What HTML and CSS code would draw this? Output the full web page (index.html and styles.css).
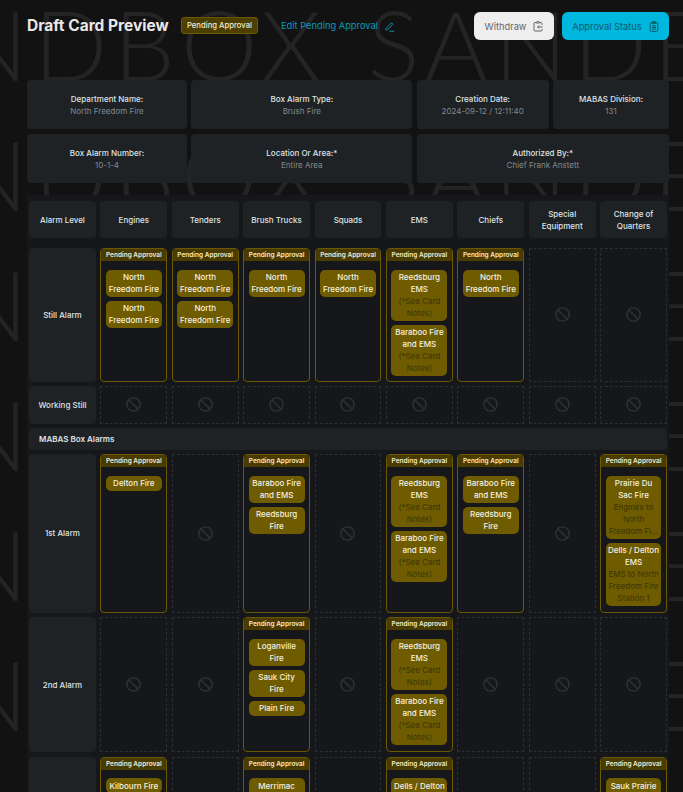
FILE: index.html
```html
<!doctype html>
<html lang="en">
    <head>
        <meta charset="UTF-8" />
        <meta name="viewport" content="width=device-width, initial-scale=1.0" />
        <title>Draft Card Preview</title>
        <link rel="stylesheet" href="styles.css">
    </head>
    <body>
        <svg class="icon-defs" width="0" height="0" aria-hidden="true">
            <symbol id="ban" viewBox="0 0 14 14">
                <circle cx="7" cy="7" r="6.2" fill="none" stroke="currentColor" stroke-width="1.3" />
                <path d="M2.7 2.7 11.3 11.3" fill="none" stroke="currentColor" stroke-width="1.3" />
            </symbol>
        </svg>
        <div class="page">
            <div class="watermark" aria-hidden="true">
                <div class="watermark-row">SANDBOX SANDBOX SANDBOX</div>
                <div class="watermark-row">SANDBOX SANDBOX SANDBOX</div>
                <div class="watermark-row">SANDBOX SANDBOX SANDBOX</div>
                <div class="watermark-row">SANDBOX SANDBOX SANDBOX</div>
                <div class="watermark-row">SANDBOX SANDBOX SANDBOX</div>
                <div class="watermark-row">SANDBOX SANDBOX SANDBOX</div>
                <div class="watermark-row">SANDBOX SANDBOX SANDBOX</div>
            </div>

            <div class="content">
                <div class="top-bar">
                    <h1>Draft Card Preview</h1>
                    <span class="status-badge">Pending Approval</span>
                    <a href="#" class="edit-link">
                        Edit Pending Approval
                        <svg width="11" height="11" viewBox="0 0 12 12" fill="none" stroke="currentColor" stroke-width="1">
                            <path d="M2 8.2 8.2 2l1.6 1.6-6.2 6.2H2z" />
                            <path d="M6 11.2h5.2" />
                        </svg>
                    </a>
                    <button class="btn btn-withdraw">
                        Withdraw
                        <svg width="10" height="11" viewBox="0 0 10 11" fill="none" stroke="currentColor" stroke-width="1">
                            <path d="M3.2 1.6H2a1 1 0 0 0-1 1V9a1 1 0 0 0 1 1h6a1 1 0 0 0 1-1V8" />
                            <path d="M3.2 1.6a1 1 0 0 1 1-1h1.6a1 1 0 0 1 1 1v.4H3.2z" />
                            <path d="M6.8 1.6H8a1 1 0 0 1 1 1V4" />
                            <path d="M9.6 6H4.6M6.2 4.4 4.6 6l1.6 1.6" />
                        </svg>
                    </button>
                    <button class="btn btn-status">
                        Approval Status
                        <svg width="10" height="11" viewBox="0 0 10 11" fill="none" stroke="currentColor" stroke-width="1">
                            <rect x="1.2" y="1.6" width="7.6" height="8.8" rx="1.2" />
                            <rect x="3" y="0.6" width="4" height="2" rx="0.6" />
                            <path d="M3 5h4M3 6.6h4M3 8.2h4" />
                        </svg>
                    </button>
                </div>

                <div class="info-grid">
                    <div class="info-card"><strong>Department Name:</strong><span>North Freedom Fire</span></div>
                    <div class="info-card"><strong>Box Alarm Type:</strong><span>Brush Fire</span></div>
                    <div class="info-card"><strong>Creation Date:</strong><span>2024-09-12 / 12:11:40</span></div>
                    <div class="info-card"><strong>MABAS Division:</strong><span>131</span></div>
                    <div class="info-card"><strong>Box Alarm Number:</strong><span>10-1-4</span></div>
                    <div class="info-card"><strong>Location Or Area:*</strong><span>Entire Area</span></div>
                    <div class="info-card info-wide"><strong>Authorized By:*</strong><span>Chief Frank Anstett</span></div>
                </div>

                <div class="alarm-panel">
                    <div class="alarm-grid">
                        <div class="col-head">Alarm Level</div>
                        <div class="col-head">Engines</div>
                        <div class="col-head">Tenders</div>
                        <div class="col-head">Brush Trucks</div>
                        <div class="col-head">Squads</div>
                        <div class="col-head">EMS</div>
                        <div class="col-head">Chiefs</div>
                        <div class="col-head">Special Equipment</div>
                        <div class="col-head">Change of Quarters</div>

                        <!-- Still Alarm -->
                        <div class="row-head">Still Alarm</div>
                        <div class="cell-pending">
                            <div class="pending-title">Pending Approval</div>
                            <div class="chips">
                                <div class="chip">North Freedom Fire</div>
                                <div class="chip">North Freedom Fire</div>
                            </div>
                        </div>
                        <div class="cell-pending">
                            <div class="pending-title">Pending Approval</div>
                            <div class="chips">
                                <div class="chip">North Freedom Fire</div>
                                <div class="chip">North Freedom Fire</div>
                            </div>
                        </div>
                        <div class="cell-pending">
                            <div class="pending-title">Pending Approval</div>
                            <div class="chips">
                                <div class="chip">North Freedom Fire</div>
                            </div>
                        </div>
                        <div class="cell-pending">
                            <div class="pending-title">Pending Approval</div>
                            <div class="chips">
                                <div class="chip">North Freedom Fire</div>
                            </div>
                        </div>
                        <div class="cell-pending">
                            <div class="pending-title">Pending Approval</div>
                            <div class="chips">
                                <div class="chip">Reedsburg EMS<span class="chip-note">(*See Card Notes)</span></div>
                                <div class="chip">Baraboo Fire and EMS<span class="chip-note">(*See Card Notes)</span></div>
                            </div>
                        </div>
                        <div class="cell-pending">
                            <div class="pending-title">Pending Approval</div>
                            <div class="chips">
                                <div class="chip">North Freedom Fire</div>
                            </div>
                        </div>
                        <div class="cell-empty"><svg><use href="#ban" /></svg></div>
                        <div class="cell-empty"><svg><use href="#ban" /></svg></div>

                        <!-- Working Still -->
                        <div class="row-head row-short">Working Still</div>
                        <div class="cell-empty"><svg><use href="#ban" /></svg></div>
                        <div class="cell-empty"><svg><use href="#ban" /></svg></div>
                        <div class="cell-empty"><svg><use href="#ban" /></svg></div>
                        <div class="cell-empty"><svg><use href="#ban" /></svg></div>
                        <div class="cell-empty"><svg><use href="#ban" /></svg></div>
                        <div class="cell-empty"><svg><use href="#ban" /></svg></div>
                        <div class="cell-empty"><svg><use href="#ban" /></svg></div>
                        <div class="cell-empty"><svg><use href="#ban" /></svg></div>

                        <div class="section-head">MABAS Box Alarms</div>

                        <!-- 1st Alarm -->
                        <div class="row-head row-first">1st Alarm</div>
                        <div class="cell-pending">
                            <div class="pending-title">Pending Approval</div>
                            <div class="chips">
                                <div class="chip">Delton Fire</div>
                            </div>
                        </div>
                        <div class="cell-empty"><svg><use href="#ban" /></svg></div>
                        <div class="cell-pending">
                            <div class="pending-title">Pending Approval</div>
                            <div class="chips">
                                <div class="chip">Baraboo Fire and EMS</div>
                                <div class="chip">Reedsburg Fire</div>
                            </div>
                        </div>
                        <div class="cell-empty"><svg><use href="#ban" /></svg></div>
                        <div class="cell-pending">
                            <div class="pending-title">Pending Approval</div>
                            <div class="chips">
                                <div class="chip">Reedsburg EMS<span class="chip-note">(*See Card Notes)</span></div>
                                <div class="chip">Baraboo Fire and EMS<span class="chip-note">(*See Card Notes)</span></div>
                            </div>
                        </div>
                        <div class="cell-pending">
                            <div class="pending-title">Pending Approval</div>
                            <div class="chips">
                                <div class="chip">Baraboo Fire and EMS</div>
                                <div class="chip">Reedsburg Fire</div>
                            </div>
                        </div>
                        <div class="cell-empty"><svg><use href="#ban" /></svg></div>
                        <div class="cell-pending">
                            <div class="pending-title">Pending Approval</div>
                            <div class="chips">
                                <div class="chip">Prairie Du Sac Fire<span class="chip-note">Engines to North Freedom Fi...</span></div>
                                <div class="chip">Dells / Delton EMS<span class="chip-note">EMS to North Freedom Fire Station 1</span></div>
                            </div>
                        </div>

                        <!-- 2nd Alarm -->
                        <div class="row-head row-second">2nd Alarm</div>
                        <div class="cell-empty"><svg><use href="#ban" /></svg></div>
                        <div class="cell-empty"><svg><use href="#ban" /></svg></div>
                        <div class="cell-pending">
                            <div class="pending-title">Pending Approval</div>
                            <div class="chips">
                                <div class="chip">Loganville Fire</div>
                                <div class="chip">Sauk City Fire</div>
                                <div class="chip">Plain Fire</div>
                            </div>
                        </div>
                        <div class="cell-empty"><svg><use href="#ban" /></svg></div>
                        <div class="cell-pending">
                            <div class="pending-title">Pending Approval</div>
                            <div class="chips">
                                <div class="chip">Reedsburg EMS<span class="chip-note">(*See Card Notes)</span></div>
                                <div class="chip">Baraboo Fire and EMS<span class="chip-note">(*See Card Notes)</span></div>
                            </div>
                        </div>
                        <div class="cell-empty"><svg><use href="#ban" /></svg></div>
                        <div class="cell-empty"><svg><use href="#ban" /></svg></div>
                        <div class="cell-empty"><svg><use href="#ban" /></svg></div>

                        <!-- 3rd Alarm -->
                        <div class="row-head row-tall">3rd Alarm</div>
                        <div class="cell-pending">
                            <div class="pending-title">Pending Approval</div>
                            <div class="chips">
                                <div class="chip">Kilbourn Fire</div>
                            </div>
                        </div>
                        <div class="cell-empty"><svg><use href="#ban" /></svg></div>
                        <div class="cell-pending">
                            <div class="pending-title">Pending Approval</div>
                            <div class="chips">
                                <div class="chip">Merrimac Fire</div>
                            </div>
                        </div>
                        <div class="cell-empty"><svg><use href="#ban" /></svg></div>
                        <div class="cell-pending">
                            <div class="pending-title">Pending Approval</div>
                            <div class="chips">
                                <div class="chip">Dells / Delton EMS</div>
                            </div>
                        </div>
                        <div class="cell-empty"><svg><use href="#ban" /></svg></div>
                        <div class="cell-empty"><svg><use href="#ban" /></svg></div>
                        <div class="cell-pending">
                            <div class="pending-title">Pending Approval</div>
                            <div class="chips">
                                <div class="chip">Sauk Prairie Fire</div>
                            </div>
                        </div>
                    </div>
                </div>
            </div>
        </div>
    </body>
</html>
```

FILE: styles.css
```css
html,
body {
    margin: 0;
    height: 792px;
    overflow: hidden;
    background-color: #121212;
}
body {
    font-family: "Inter", "Liberation Sans", sans-serif;
    font-size: 8px;
    line-height: 12px;
    color: #e2e4e6;
}
.icon-defs {
    position: absolute;
}
.page {
    position: relative;
    height: 792px;
    overflow: hidden;
}
.watermark {
    position: absolute;
    top: -6px;
    left: -172px;
    display: flex;
    flex-direction: column;
    gap: 30px;
    font-family: "Lato", sans-serif;
    font-size: 97px;
    font-weight: 300;
    line-height: 100px;
    letter-spacing: 6px;
    word-spacing: 8px;
    white-space: nowrap;
    color: #242424;
}
.content {
    position: relative;
    padding: 12px 14px 0 27px;
}
.top-bar {
    display: flex;
    align-items: center;
    height: 28px;
}
h1 {
    margin: 0 12px 0 0;
    width: 142px;
    font-size: 15.5px;
    font-weight: 700;
    line-height: 28px;
    white-space: nowrap;
    color: #e8e8e8;
}
.status-badge {
    width: 77px;
    height: 17px;
    margin-top: -1px;
    box-sizing: border-box;
    border: 1px solid #6b5800;
    border-radius: 3px;
    background-color: #4d3f00;
    font-size: 7.7px;
    line-height: 15px;
    font-weight: 500;
    text-align: center;
    white-space: nowrap;
    color: #f2ead0;
}
.edit-link {
    display: flex;
    align-items: center;
    gap: 6px;
    margin-left: 23px;
    font-size: 9.3px;
    text-decoration: none;
    white-space: nowrap;
    color: #0a9ab8;
}
.btn {
    display: flex;
    align-items: center;
    justify-content: center;
    gap: 7px;
    height: 28px;
    border: none;
    border-radius: 6px;
    padding: 0;
    font-family: inherit;
    font-size: 9.3px;
    cursor: pointer;
}
.btn-withdraw {
    width: 80px;
    margin-left: auto;
    background-color: #eeeeee;
    color: #666666;
}
.btn-status {
    width: 107px;
    margin-left: 8px;
    background-color: #00b7dd;
    color: #0b5a70;
}
.info-grid {
    display: grid;
    grid-template-columns: 160px 221px 132px 116px;
    gap: 5px 4.33px;
    margin-top: 40px;
}
.info-card {
    display: flex;
    flex-direction: column;
    align-items: center;
    justify-content: center;
    height: 49px;
    border-radius: 4px;
    background-color: #1e2225;
}
.info-card strong {
    font-weight: 500;
    color: #dfe2e4;
}
.info-card span {
    color: #85898c;
}
.info-wide {
    grid-column: span 2;
}
.alarm-panel {
    margin: 12px 0 0;
    padding: 6px 2px 0;
    background-color: #15171a;
}
.alarm-grid {
    display: grid;
    grid-template-columns: repeat(9, 1fr);
    gap: 4.5px;
}
.col-head,
.row-head,
.section-head {
    display: flex;
    align-items: center;
    justify-content: center;
    border-radius: 4px;
    background-color: #1e2225;
    font-weight: 500;
    text-align: center;
    color: #dfe2e4;
}
.col-head {
    min-height: 37px;
    margin-bottom: 5.5px;
}
.row-short {
    min-height: 37.5px;
}
.row-first {
    min-height: 158.5px;
}
.row-second {
    min-height: 135px;
}
.row-tall {
    min-height: 158px;
}
.section-head {
    grid-column: 1 / -1;
    justify-content: flex-start;
    height: 21.5px;
    padding-left: 10px;
    font-weight: 600;
}
.cell-empty {
    display: flex;
    align-items: center;
    justify-content: center;
    box-sizing: border-box;
    border: 1px dashed #2c2e31;
    border-radius: 1px;
    color: #303236;
}
.cell-empty svg {
    width: 15px;
    height: 15px;
}
.cell-pending {
    box-sizing: border-box;
    min-width: 0;
    border: 1px solid #6b5800;
    border-radius: 4px;
    overflow: hidden;
}
.pending-title {
    height: 12px;
    background-color: #4a3b00;
    font-size: 6.5px;
    font-weight: 600;
    line-height: 12px;
    text-align: center;
    white-space: nowrap;
    color: #f2ead0;
}
.chips {
    display: flex;
    flex-direction: column;
    gap: 4px;
    padding: 8.5px 4.5px 5px;
}
.chip {
    padding: 1.5px 2px;
    border-radius: 5px;
    background-color: #6f5b00;
    font-weight: 500;
    text-align: center;
    color: #f4f1e0;
}
.chip-note {
    display: block;
    font-weight: 400;
    color: #3a3608;
}
```
